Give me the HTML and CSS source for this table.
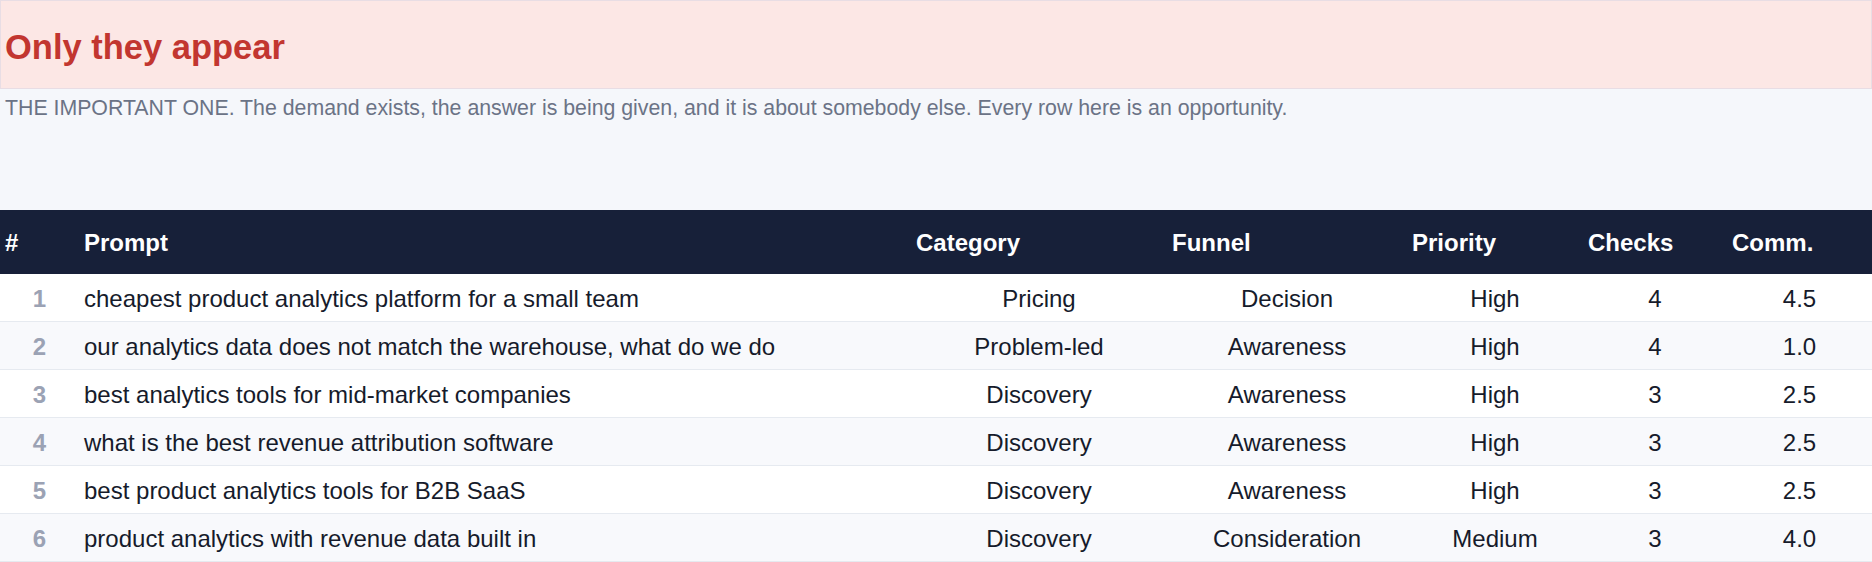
FILE: index.html
```html
<!DOCTYPE html>
<html lang="en">
<head>
<meta charset="utf-8">
<title>Only they appear</title>
<link rel="stylesheet" href="styles.css">
</head>
<body>
<header class="banner">
  <h1 class="banner-title">Only they appear</h1>
</header>
<p class="lede">THE IMPORTANT ONE. The demand exists, the answer is being given, and it is about somebody else. Every row here is an opportunity.</p>
<table class="grid">
  <colgroup>
    <col class="c-num"><col class="c-prompt"><col class="c-cat"><col class="c-fun"><col class="c-pri"><col class="c-chk"><col class="c-com">
  </colgroup>
  <thead>
    <tr><th>#</th><th>Prompt</th><th>Category</th><th>Funnel</th><th>Priority</th><th>Checks</th><th>Comm.</th></tr>
  </thead>
  <tbody>
    <tr><td class="num">1</td><td class="prompt">cheapest product analytics platform for a small team</td><td>Pricing</td><td>Decision</td><td>High</td><td>4</td><td>4.5</td></tr>
    <tr><td class="num">2</td><td class="prompt">our analytics data does not match the warehouse, what do we do</td><td>Problem-led</td><td>Awareness</td><td>High</td><td>4</td><td>1.0</td></tr>
    <tr><td class="num">3</td><td class="prompt">best analytics tools for mid-market companies</td><td>Discovery</td><td>Awareness</td><td>High</td><td>3</td><td>2.5</td></tr>
    <tr><td class="num">4</td><td class="prompt">what is the best revenue attribution software</td><td>Discovery</td><td>Awareness</td><td>High</td><td>3</td><td>2.5</td></tr>
    <tr><td class="num">5</td><td class="prompt">best product analytics tools for B2B SaaS</td><td>Discovery</td><td>Awareness</td><td>High</td><td>3</td><td>2.5</td></tr>
    <tr><td class="num">6</td><td class="prompt">product analytics with revenue data built in</td><td>Discovery</td><td>Consideration</td><td>Medium</td><td>3</td><td>4.0</td></tr>
  </tbody>
</table>
</body>
</html>
```
FILE: styles.css
```css
html, body {
  margin: 0;
  padding: 0;
}
body {
  background: #f5f7fb;
  font-family: "Liberation Sans", Arial, sans-serif;
  color: #161b2b;
  overflow: hidden;
}
.banner {
  box-sizing: border-box;
  height: 89px;
  background: #fce7e5;
  border: 1px solid #e8dde4;
  padding: 29px 4px 0;
}
.banner-title {
  margin: 0;
  font-size: 34.5px;
  line-height: 34px;
  font-weight: 700;
  color: #c23630;
}
.lede {
  margin: 7px 0 0;
  padding: 0 5px;
  height: 114px;
  font-size: 21.3px;
  line-height: 24px;
  color: #6b7386;
}
.grid {
  width: 100%;
  border-collapse: collapse;
  table-layout: fixed;
  font-size: 24px;
}
.c-num { width: 79px; }
.c-prompt { width: 832px; }
.c-cat { width: 256px; }
.c-fun { width: 240px; }
.c-pri { width: 176px; }
.c-chk { width: 144px; }
.c-com { width: 145px; }
.grid th {
  background: #172039;
  color: #ffffff;
  font-weight: 700;
  text-align: left;
  padding: 1px 5px 0;
  line-height: 63px;
  white-space: nowrap;
}
.grid td {
  padding: 2px 5px 0;
  line-height: 45px;
  text-align: center;
  border-bottom: 1px solid #e6eaf0;
  white-space: nowrap;
}
.grid tbody tr:nth-child(odd) { background: #ffffff; }
.grid tbody tr:nth-child(even) { background: #f8f9fc; }
.grid td.prompt { text-align: left; }
.grid td.num {
  font-weight: 700;
  color: #9ba2b4;
}
```
